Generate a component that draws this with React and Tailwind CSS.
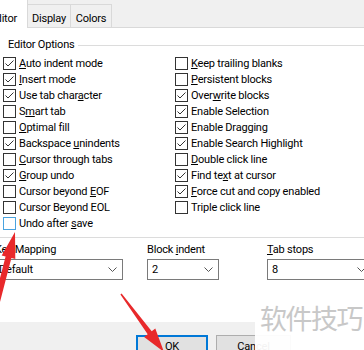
import React from "react"

const leftOptions = [
    { label: <><u>A</u>uto indent mode</>, checked: true },
    { label: <><u>I</u>nsert mode</>, checked: true },
    { label: <>Use tab char<u>a</u>cter</>, checked: true },
    { label: <>S<u>m</u>art tab</>, checked: false },
    { label: <><u>O</u>ptimal fill</>, checked: false },
    { label: <>Backspace <u>u</u>nindents</>, checked: true },
    { label: <><u>C</u>ursor through tabs</>, checked: false },
    { label: <><u>G</u>roup undo</>, checked: true },
    { label: <>Cursor beyond <u>E</u>OF</>, checked: false },
    { label: <>Cursor Beyond EOL</>, checked: false },
    { label: <>Undo after <u>s</u>ave</>, checked: false, focus: true },
]

const rightOptions = [
    { label: <><u>K</u>eep trailing blanks</>, checked: false },
    { label: <><u>P</u>ersistent blocks</>, checked: false },
    { label: <>Over<u>w</u>rite blocks</>, checked: true },
    { label: <>Enable Selection</>, checked: true },
    { label: <>Enable Dragging</>, checked: true },
    { label: <>Enable Search Highlight</>, checked: true },
    { label: <><u>D</u>ouble click line</>, checked: false },
    { label: <>Find te<u>x</u>t at cursor</>, checked: true },
    { label: <><u>F</u>orce cut and copy enabled</>, checked: true },
    { label: <>Triple click line</>, checked: false },
]

const CheckRow = ({ label, checked, focus }) => (
    <div className="flex h-[16px] items-start">
        <div className={`mt-[1px] flex h-[13px] w-[13px] shrink-0 items-center justify-center border bg-white ${focus ? "border-[#4aa3df]" : "border-[#333333]"}`}>
            {checked && (
                <svg width="11" height="11" viewBox="0 0 11 11">
                    <polyline points="1.5,5.5 4,8 9.5,2.5" fill="none" stroke="#333" strokeWidth="1" />
                </svg>
            )}
        </div>
        <span className="ml-[3px] whitespace-nowrap leading-[16px]">{label}</span>
    </div>
)

const Chevron = () => (
    <svg width="9" height="5" viewBox="0 0 9 5" className="shrink-0">
        <polyline points="0.5,0.5 4.5,4.5 8.5,0.5" fill="none" stroke="#555" strokeWidth="1" />
    </svg>
)

const Combo = ({ value, className }) => (
    <div className={`mt-[2px] flex h-[21px] items-center justify-between border border-[#7a7a7a] bg-white pl-[4px] pr-[5px] ${className}`}>
        <span className="leading-[16px]">{value}</span>
        <Chevron />
    </div>
)

export default function App() {
    return (
        <div className="relative h-[350px] w-[364px] overflow-hidden bg-white font-['Roboto',sans-serif] text-[11px] tracking-[-0.2px] text-black">

            {/* Tabs */}
            <div className="flex h-[28px] items-end bg-[#f0f0f0]">
                <div className="flex h-[28px] w-[28px] shrink-0 justify-end overflow-hidden border-r border-[#d9d9d9] bg-white pr-[10px] pt-[11px] leading-[16px]">
                    <span className="whitespace-nowrap">Editor</span>
                </div>
                <div className="h-[24px] w-[43px] shrink-0 border-y border-r border-[#d9d9d9] pt-[6px] text-center leading-[16px]">Display</div>
                <div className="h-[24px] w-[41px] shrink-0 border-y border-r border-[#d9d9d9] pt-[6px] text-center leading-[16px]">Colors</div>
                <div className="h-[24px] flex-1 border-b border-[#d9d9d9]" />
            </div>

            {/* Editor Options group */}
            <div className="mt-[11px] flex h-[12px] items-center">
                <span className="whitespace-nowrap pl-[8px] leading-[12px]">Editor Options</span>
                <div className="ml-[3px] h-px flex-1 bg-[#dcdcdc]" />
            </div>
            <div className="mt-[5px] grid grid-cols-[172px_1fr] border-b border-[#dcdcdc] pb-[5px] pl-[3px]">
                <div className="flex flex-col">
                    {leftOptions.map((o, i) => <CheckRow key={i} {...o} />)}
                </div>
                <div className="flex flex-col">
                    {rightOptions.map((o, i) => <CheckRow key={i} {...o} />)}
                </div>
            </div>

            {/* Combos */}
            <div className="mt-[5px] flex">
                <div className="ml-[-6px] w-[129px] shrink-0">
                    <div className="pl-[1px] leading-[14px]">Key Mapping</div>
                    <Combo value="Default" />
                </div>
                <div className="ml-[24px] w-[72px] shrink-0">
                    <div className="leading-[14px]">Block <u>i</u>ndent</div>
                    <Combo value="2" />
                </div>
                <div className="ml-[48px] w-[105px] shrink-0">
                    <div className="leading-[14px]"><u>T</u>ab stops</div>
                    <Combo value="8" />
                </div>
            </div>

            {/* Footer */}
            <div className="absolute inset-x-0 bottom-0 top-[322px] flex items-start bg-[#f0f0f0] pt-[13px]">
                <button className="ml-[136px] h-[23px] w-[72px] border-2 border-[#0078d7] bg-[#e1e1e1] leading-[16px]">OK</button>
                <button className="ml-[8px] h-[23px] w-[75px] border border-[#adadad] bg-[#e1e1e1] leading-[16px]">Cancel</button>
            </div>

            {/* Watermark */}
            <div className="absolute left-[255px] top-[292px] h-[58px] w-[109px] bg-white/95 pl-[5px] pt-[10px]">
                <span className="whitespace-nowrap font-['Noto_Sans_CJK_SC',sans-serif] text-[27px] leading-[32px] tracking-[-1.5px] text-[#c8c8c8]">软件技巧</span>
            </div>

            {/* Annotation arrows */}
            <svg className="pointer-events-none absolute inset-0" width="364" height="350" viewBox="0 0 364 350">
                <polygon points="15,232 15.3,258.9 11.4,258 -5.9,324.8 -11.7,323.3 5.6,256.5 1.7,255.5" fill="#e8292b" />
                <polygon points="164,352 155.3,328.5 151.7,331.2 121.6,293.5 120.4,294.5 147.7,334.2 144.1,336.9" fill="#e8292b" />
            </svg>
        </div>
    )
}
